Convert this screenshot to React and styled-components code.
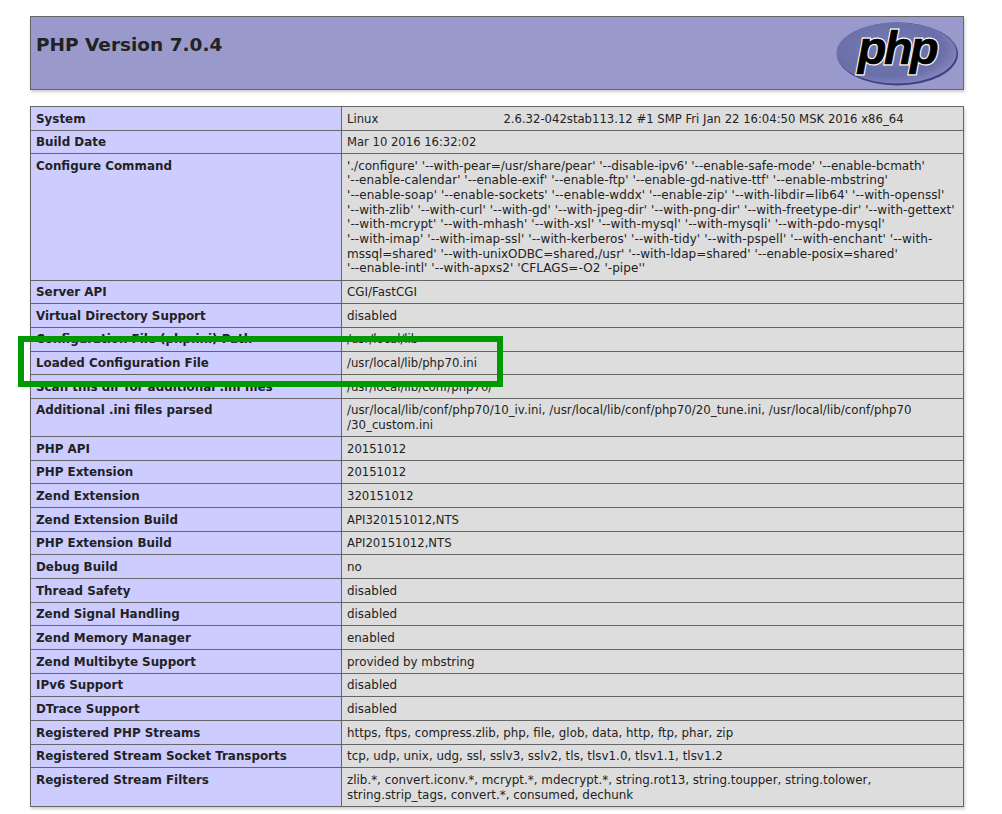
import React from "react";
import styled, { createGlobalStyle } from "styled-components";

const GlobalStyle = createGlobalStyle`
  body {
    margin: 0;
    background: #fff;
    color: #222;
    font-family: "DejaVu Sans", sans-serif;
    font-size: 12px;
  }
`;

const Page = styled.div`
  position: relative;
  width: 934px;
  padding: 16px 0 7px;
  margin-left: 30px;
`;

const Header = styled.div`
  display: flex;
  justify-content: space-between;
  box-sizing: border-box;
  height: 74px;
  padding: 5px 5px 0;
  margin-bottom: 16px;
  background: #99c;
  border: 1px solid #666;
  box-shadow: 1px 2px 3px #ccc;
`;

const Title = styled.h1`
  margin: 0;
  padding-top: 8px;
  font-size: 18.5px;
  font-weight: bold;
  line-height: 30px;
`;

const Logo = styled.svg`
  display: block;
  width: 122px;
  height: 64px;
`;

const InfoTable = styled.table`
  width: 934px;
  table-layout: fixed;
  border-collapse: collapse;
  box-shadow: 1px 2px 3px #ccc;
`;

const Label = styled.td`
  width: 300px;
  padding: 4.5px 5px 3.5px;
  background: #ccf;
  border: 1px solid #666;
  font-size: 11.9px;
  font-weight: bold;
  line-height: 14.65px;
  vertical-align: baseline;
`;

const Value = styled.td`
  padding: 4.5px 5px 3.5px;
  background: #ddd;
  border: 1px solid #666;
  font-size: ${(p) => p.$size || 11.9}px;
  line-height: 14.65px;
  vertical-align: baseline;
`;

const CommandLine = styled.span`
  display: block;
  white-space: nowrap;
  letter-spacing: ${(p) => p.$spacing}px;
`;

const Gap = styled.span`
  display: inline-block;
  width: 125px;
`;

const Highlight = styled.div`
  position: absolute;
  top: 336px;
  left: -12px;
  box-sizing: border-box;
  width: 485px;
  height: 51px;
  border: 6px solid #090;
`;

const configureLines = [
  ["'./configure' '--with-pear=/usr/share/pear' '--disable-ipv6' '--enable-safe-mode' '--enable-bcmath'", 0],
  ["'--enable-calendar' '--enable-exif' '--enable-ftp' '--enable-gd-native-ttf' '--enable-mbstring'", 0.055],
  ["'--enable-soap' '--enable-sockets' '--enable-wddx' '--enable-zip' '--with-libdir=lib64' '--with-openssl'", 0.08],
  ["'--with-zlib' '--with-curl' '--with-gd' '--with-jpeg-dir' '--with-png-dir' '--with-freetype-dir' '--with-gettext'", 0.07],
  ["'--with-mcrypt' '--with-mhash' '--with-xsl' '--with-mysql' '--with-mysqli' '--with-pdo-mysql'", 0.11],
  ["'--with-imap' '--with-imap-ssl' '--with-kerberos' '--with-tidy' '--with-pspell' '--with-enchant' '--with-", 0.105],
  ["mssql=shared' '--with-unixODBC=shared,/usr' '--with-ldap=shared' '--enable-posix=shared'", 0.02],
  ["'--enable-intl' '--with-apxs2' 'CFLAGS=-O2 '-pipe''", 0.08],
];

const rows = [
  ["System", <>Linux<Gap />2.6.32-042stab113.12 #1 SMP Fri Jan 22 16:04:50 MSK 2016 x86_64</>, 11.65],
  ["Build Date", "Mar 10 2016 16:32:02", 11.6],
  ["Configure Command", configureLines.map(([line, spacing]) => <CommandLine key={line} $spacing={spacing}>{line}</CommandLine>), 12],
  ["Server API", "CGI/FastCGI"],
  ["Virtual Directory Support", "disabled"],
  ["Configuration File (php.ini) Path", "/usr/local/lib", 11.7],
  ["Loaded Configuration File", "/usr/local/lib/php70.ini", 11.7],
  ["Scan this dir for additional .ini files", "/usr/local/lib/conf/php70/", 11.7],
  ["Additional .ini files parsed", "/usr/local/lib/conf/php70/10_iv.ini, /usr/local/lib/conf/php70/20_tune.ini, /usr/local/lib/conf/php70 /30_custom.ini", 11.8],
  ["PHP API", "20151012", 11.65],
  ["PHP Extension", "20151012", 11.65],
  ["Zend Extension", "320151012", 11.65],
  ["Zend Extension Build", "API320151012,NTS", 11.65],
  ["PHP Extension Build", "API20151012,NTS", 11.65],
  ["Debug Build", "no"],
  ["Thread Safety", "disabled"],
  ["Zend Signal Handling", "disabled"],
  ["Zend Memory Manager", "enabled"],
  ["Zend Multibyte Support", "provided by mbstring"],
  ["IPv6 Support", "disabled"],
  ["DTrace Support", "disabled"],
  ["Registered PHP Streams", "https, ftps, compress.zlib, php, file, glob, data, http, ftp, phar, zip", 11.83],
  ["Registered Stream Socket Transports", "tcp, udp, unix, udg, ssl, sslv3, sslv2, tls, tlsv1.0, tlsv1.1, tlsv1.2"],
  ["Registered Stream Filters", "zlib.*, convert.iconv.*, mcrypt.*, mdecrypt.*, string.rot13, string.toupper, string.tolower, string.strip_tags, convert.*, consumed, dechunk"],
];

const logoText = {
  x: 61,
  y: 42,
  textAnchor: "middle",
  fontFamily: "Liberation Sans",
  fontWeight: "bold",
  fontStyle: "italic",
  fontSize: 47,
  letterSpacing: -2.5,
};

function PhpLogo() {
  return (
    <Logo viewBox="0 0 122 64" aria-label="PHP logo">
      <defs>
        <radialGradient id="phpOval" cx="0.42" cy="0.42" r="0.62">
          <stop offset="0" stopColor="#777bb3" />
          <stop offset="0.75" stopColor="#6b6fa9" />
          <stop offset="1" stopColor="#8487bd" />
        </radialGradient>
      </defs>
      <ellipse cx="61.5" cy="32" rx="60.5" ry="31.5" fill="#3d3d80" />
      <ellipse cx="60.5" cy="31" rx="60" ry="30.5" fill="url(#phpOval)" />
      <text {...logoText} fill="#fff" stroke="#fff" strokeWidth="3">php</text>
      <text {...logoText} fill="#000" stroke="#000" strokeWidth="0.7">php</text>
    </Logo>
  );
}

export default function App() {
  return (
    <Page>
      <GlobalStyle />
      <Header>
        <Title>PHP Version 7.0.4</Title>
        <PhpLogo />
      </Header>
      <InfoTable>
        <tbody>
          {rows.map(([label, value, size]) => (
            <tr key={label}>
              <Label>{label}</Label>
              <Value $size={size}>{value}</Value>
            </tr>
          ))}
        </tbody>
      </InfoTable>
      <Highlight />
    </Page>
  );
}
